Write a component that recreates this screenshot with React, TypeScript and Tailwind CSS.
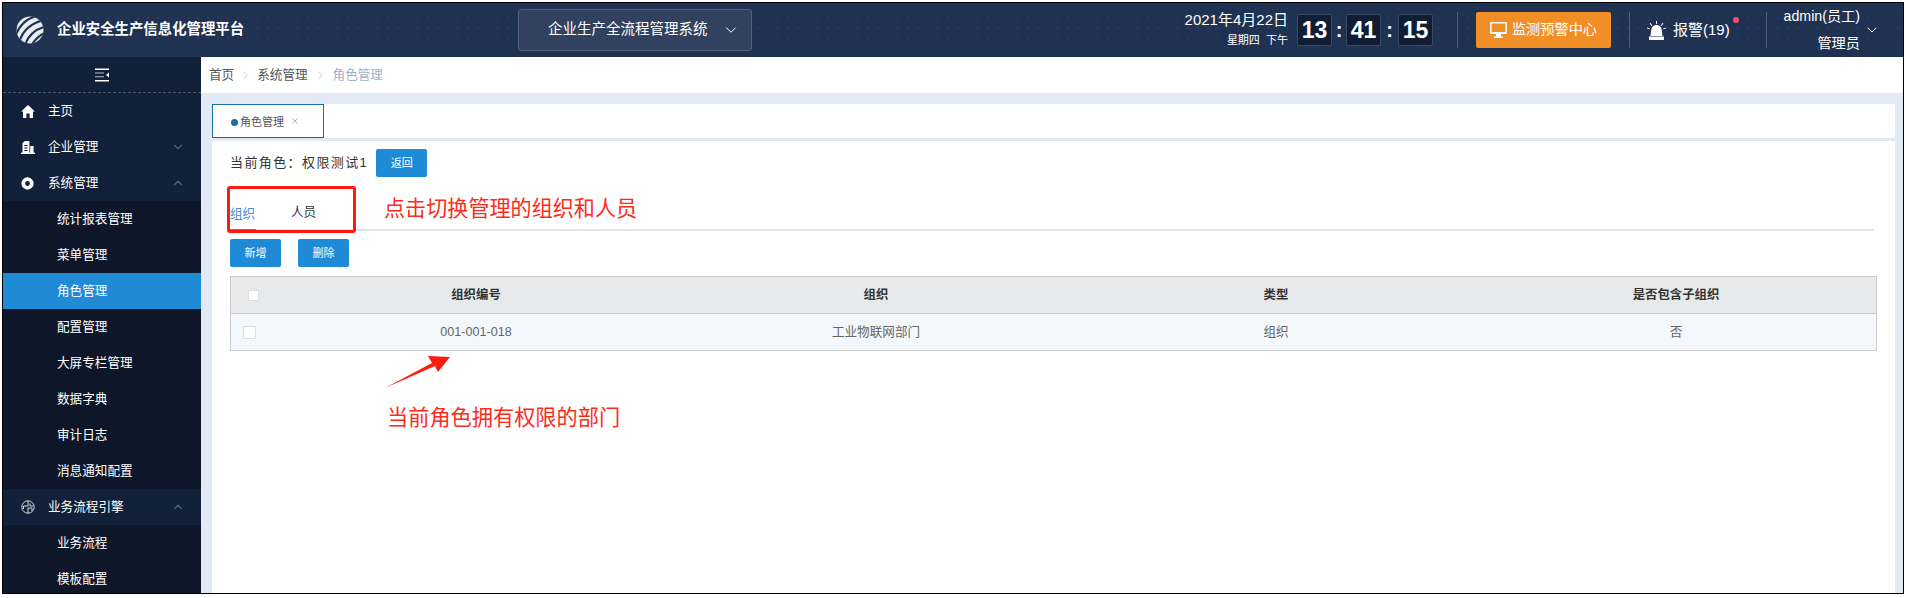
import * as React from "react"
import { ChevronDown, ChevronUp, ChevronRight, X } from "lucide-react"

const font = "font-['Liberation_Sans','Noto_Sans_CJK_SC',sans-serif]"

const Logo = () => (
  <svg viewBox="0 0 28 28" className="w-[28px] h-[28px] shrink-0">
    <defs>
      <clipPath id="globe">
        <circle cx="14" cy="14" r="13.5" />
      </clipPath>
    </defs>
    <g clipPath="url(#globe)">
      <circle cx="14" cy="14" r="14" fill="#e8edf3" />
      <g fill="none" stroke="#1f3252" strokeWidth="2.2">
        <path d="M-1 20C3 10 10 3 20 0" />
        <path d="M3 27C6 16 14 7 29 4" />
        <path d="M9 29C12 20 18 13 31 10" />
        <path d="M15 30C18 25 23 19 31 16" />
        <path d="M22 30C24 27 27 24 31 22" />
      </g>
    </g>
  </svg>
)

const HomeIcon = () => (
  <svg viewBox="0 0 14 13" className="w-[14px] h-[13px]" fill="#fff">
    <path d="M7 0L14 6.6H12V13H8.6V8.6H5.4V13H2V6.6H0Z" />
  </svg>
)

const BuildingIcon = () => (
  <svg viewBox="0 0 14 13" className="w-[14px] h-[13px]" fill="#fff">
    <path d="M1.5 2L4 0H8.4V12H1.5Z" />
    <path d="M9.2 5H12.6V12H9.2Z" />
    <path d="M0 11.6H14V13H0Z" />
    <path d="M3.3 4H6.6V5H3.3ZM3.3 6.5H6.6V7.5H3.3ZM3.3 9H6.6V10H3.3Z" fill="#12203a" />
  </svg>
)

const RingIcon = () => (
  <svg viewBox="0 0 14 14" className="w-[13px] h-[13px]">
    <circle cx="7" cy="7" r="4.6" fill="none" stroke="#fff" strokeWidth="4" />
  </svg>
)

const FlowIcon = () => (
  <svg viewBox="0 0 14 14" className="w-[14px] h-[14px]" fill="none" stroke="#d5d8de" strokeWidth="1">
    <circle cx="7" cy="7" r="6.2" />
    <path d="M7 1V6H2.5V9M7 8V13M7 8H11V11M9 3.5V6H12" />
  </svg>
)

const MenuFold = () => (
  <svg viewBox="0 0 14 14" className="w-[14px] h-[14px]" fill="#fff">
    <path d="M0 0.5H14V2H0ZM0 12H14V13.5H0Z" />
    <path d="M0 4.5H9V5.6H0ZM0 8.2H9V9.3H0Z" fill="#b8bdc7" />
    <path d="M14 4.5V9.5L11 7Z" />
  </svg>
)

const Monitor = () => (
  <svg viewBox="0 0 17 16" className="w-[17px] h-[16px]" fill="#fff">
    <path fillRule="evenodd" d="M1.5 0H15.5A1.5 1.5 0 0 1 17 1.5V10.5A1.5 1.5 0 0 1 15.5 12H1.5A1.5 1.5 0 0 1 0 10.5V1.5A1.5 1.5 0 0 1 1.5 0ZM1.6 1.6V10H15.4V1.6Z" />
    <path d="M1 10H16V12H1ZM6 12H11V14.5H13V16H4V14.5H6Z" />
  </svg>
)

const Siren = () => (
  <svg viewBox="0 0 19 19" className="w-[19px] h-[19px]" fill="#fff">
    <path d="M9.5 4C6 4 4.6 6.6 4.2 9L3.4 15H15.6L14.8 9C14.4 6.6 13 4 9.5 4Z" />
    <path d="M2 15.5H17V19H2Z" />
    <path d="M9 0H10V3H9ZM2.6 2.4L3.4 1.8L5.4 4.4L4.6 5ZM16.4 2.4L15.6 1.8L13.6 4.4L14.4 5ZM0 7.4L0.3 6.5L3 7.4L2.7 8.3ZM19 7.4L18.7 6.5L16 7.4L16.3 8.3Z" />
  </svg>
)

const Digit = ({ value }: { value: string }) => (
  <div className="w-[35px] h-[32px] flex items-center justify-center bg-[#111d33] border border-[#3a4a66] rounded-[2px] text-white text-[23px] font-bold leading-none">
    {value}
  </div>
)

const Divider = () => <div className="w-px h-[36px] bg-[#4a5d7c]" />

const Header = () => (
  <header className="h-[54px] shrink-0 flex items-center bg-[#1f3252] bg-[radial-gradient(#273b5c_1px,transparent_1px)] bg-[length:10px_10px] text-white">
    <div className="w-[515px] pl-[13px] flex items-center gap-[13px]">
      <Logo />
      <span className="text-[14.4px] font-bold">企业安全生产信息化管理平台</span>
    </div>
    <div className="w-[234px] h-[42px] flex items-center pl-[29px] gap-[14px] bg-[#31415f] border border-[#4f6080] rounded-[3px] text-[14.5px]">
      <span>企业生产全流程管理系统</span>
      <ChevronDown size={18} strokeWidth={1.3} />
    </div>
    <div className="ml-auto flex items-center">
      <div className="flex flex-col items-end mr-[9px]">
        <span className="text-[15px] leading-[20px]">2021年4月22日</span>
        <span className="text-[11px] leading-[20px]">星期四&nbsp;&nbsp;下午</span>
      </div>
      <Digit value="13" />
      <span className="w-[14px] text-center font-bold text-[20px]">:</span>
      <Digit value="41" />
      <span className="w-[17px] text-center font-bold text-[20px]">:</span>
      <Digit value="15" />
      <div className="ml-[24px] mr-[18px]">
        <Divider />
      </div>
      <div className="w-[135px] h-[36px] flex items-center justify-center gap-[5px] bg-[#f28e26] rounded-[2px] text-[14.2px]">
        <Monitor />
        <span>监测预警中心</span>
      </div>
      <div className="ml-[18px]">
        <Divider />
      </div>
      <div className="relative w-[136px] flex items-center pl-[17px] gap-[7px] text-[15px]">
        <Siren />
        <span>报警(19)</span>
        <span className="absolute left-[103px] top-[-2px] w-[6px] h-[6px] rounded-full bg-[#f0506e]" />
      </div>
      <Divider />
      <div className="w-[136px] flex items-center pl-[15px]">
        <div className="w-[78px] flex flex-col items-end text-[14.2px] leading-[27px] whitespace-nowrap">
          <span>admin(员工)</span>
          <span>管理员</span>
        </div>
        <ChevronDown size={16} strokeWidth={1.5} className="ml-[4px]" />
      </div>
    </div>
  </header>
)

type MenuRow = {
  label: string
  icon?: React.ReactNode
  arrow?: "up" | "down"
  active?: boolean
}

const menu: MenuRow[] = [
  { label: "主页", icon: <HomeIcon /> },
  { label: "企业管理", icon: <BuildingIcon />, arrow: "down" },
  { label: "系统管理", icon: <RingIcon />, arrow: "up" },
  { label: "统计报表管理" },
  { label: "菜单管理" },
  { label: "角色管理", active: true },
  { label: "配置管理" },
  { label: "大屏专栏管理" },
  { label: "数据字典" },
  { label: "审计日志" },
  { label: "消息通知配置" },
  { label: "业务流程引擎", icon: <FlowIcon />, arrow: "up" },
  { label: "业务流程" },
  { label: "模板配置" },
]

const Sidebar = () => (
  <aside className="w-[198px] shrink-0 bg-[#12203a] overflow-hidden text-white text-[12.6px]">
    <div className="h-[36px] flex items-center justify-center border-b border-dashed border-[#4a5570]">
      <MenuFold />
    </div>
    {menu.map((row) =>
      row.icon ? (
        <div key={row.label} className="h-[36px] flex items-center bg-[#12203a] pl-[18px] pr-[16px]">
          <span className="w-[27px] flex">{row.icon}</span>
          <span>{row.label}</span>
          {row.arrow === "down" && <ChevronDown size={14} className="ml-auto text-[#566079]" />}
          {row.arrow === "up" && <ChevronUp size={14} className="ml-auto text-[#566079]" />}
        </div>
      ) : (
        <div
          key={row.label}
          className={
            row.active
              ? "h-[36px] flex items-center pl-[54px] bg-[#1f8bd6]"
              : "h-[36px] flex items-center pl-[54px] bg-[#0e1729]"
          }
        >
          {row.label}
        </div>
      )
    )}
  </aside>
)

const Breadcrumb = () => (
  <div className="h-[36px] shrink-0 bg-white flex items-center pl-[8px] text-[12.6px] text-[#555]">
    <span>首页</span>
    <ChevronRight size={13} strokeWidth={1} className="mx-[5px] text-[#8f96a3]" />
    <span>系统管理</span>
    <ChevronRight size={13} strokeWidth={1} className="mx-[6px] text-[#8f96a3]" />
    <span className="text-[#a3aec6]">角色管理</span>
  </div>
)

const Btn = ({ children }: { children: React.ReactNode }) => (
  <button className="w-[51px] h-[28px] bg-[#1f8bd6] text-white text-[11px] rounded-[2px]">
    {children}
  </button>
)

const columns = ["组织编号", "组织", "类型", "是否包含子组织"]
const row = ["001-001-018", "工业物联网部门", "组织", "否"]

const RoleTable = () => (
  <div className="mt-[9px] mr-[18px] border border-[#cccccc] text-[12.6px]">
    <div className="h-[37px] grid grid-cols-[45px_repeat(4,1fr)] items-center bg-[#e8e9eb] border-b border-[#cccccc] text-[#333] font-bold text-[12.4px]">
      <span className="w-[11px] h-[11px] ml-[17px] bg-white border border-[#dddddd] rounded-[1px]" />
      {columns.map((c) => (
        <span key={c} className="text-center">
          {c}
        </span>
      ))}
    </div>
    <div className="h-[36px] grid grid-cols-[45px_repeat(4,1fr)] items-center bg-[#f4f7fb] text-[#666]">
      <span className="w-[13px] h-[13px] ml-[12px] bg-white border border-[#dddddd] rounded-[1px]" />
      {row.map((c) => (
        <span key={c} className="text-center">
          {c}
        </span>
      ))}
    </div>
  </div>
)

const Annotations = () => (
  <>
    <div className="absolute left-[15px] top-[45px] w-[129px] h-[47px] border-[3px] border-[#ff1a10] rounded-[3px]" />
    <div className="absolute left-[172px] top-[55px] text-[21.1px] leading-[26px] text-[#ff2a1a] whitespace-nowrap">
      点击切换管理的组织和人员
    </div>
    <svg viewBox="0 0 66 34" className="absolute left-[173px] top-[215px] w-[66px] h-[34px]">
      <polygon points="0,32 47,7 43,0 65,1 53,16 50,10" fill="#ff1a10" />
    </svg>
    <div className="absolute left-[175px] top-[264px] text-[21.2px] leading-[26px] text-[#ff2a1a] whitespace-nowrap">
      当前角色拥有权限的部门
    </div>
  </>
)

const Panel = () => (
  <div className="relative flex-1 bg-white pl-[18px] overflow-hidden text-[12.6px]">
    <div className="flex items-center h-[28px] mt-[8px]">
      <span className="text-[#333] text-[13px] tracking-[1.4px]">当前角色：权限测试1</span>
      <div className="ml-[8px]">
        <Btn>返回</Btn>
      </div>
    </div>
    <div className="mt-[9px] mr-[21px] h-[45px] flex items-end gap-[35px] border-b-2 border-[#dfe4ee] text-[12.6px]">
      <span className="h-[26px] w-[26px] text-[#3f8fd8] border-b-2 border-[#2f86d4] -mb-[2px]">组织</span>
      <span className="h-[26px] text-[#333]">人员</span>
    </div>
    <div className="flex gap-[17px] mt-[8px]">
      <Btn>新增</Btn>
      <Btn>删除</Btn>
    </div>
    <RoleTable />
    <Annotations />
  </div>
)

const TabBar = () => (
  <div className="h-[35px] shrink-0 bg-white border-b border-[#dfe4ee] flex mb-[2px]">
    <div className="w-[112px] flex items-center pt-[2px] pl-[18px] gap-[6px] border border-[#1a6fa0] text-[11px] text-[#555]">
      <span className="flex items-center gap-[2px]">
        <span className="w-[7px] h-[7px] rounded-full bg-[#1a6fa0]" />
        角色管理
      </span>
      <X size={10} strokeWidth={1} className="-mt-[3px]" />
    </div>
  </div>
)

export default function App() {
  return (
    <div className={`${font} w-[1906px] h-[598px] pt-[2px] pl-[2px] pr-[2px] pb-[4px] bg-white overflow-hidden`}>
      <div className="h-full flex flex-col border border-black overflow-hidden">
        <Header />
        <div className="flex flex-1 min-h-0">
          <Sidebar />
          <main className="flex-1 flex flex-col min-w-0 bg-[#e1eaf5]">
            <Breadcrumb />
            <div className="flex-1 flex flex-col min-h-0 pt-[11px] pl-[11px] pr-[8px]">
              <TabBar />
              <Panel />
            </div>
          </main>
        </div>
      </div>
    </div>
  )
}
